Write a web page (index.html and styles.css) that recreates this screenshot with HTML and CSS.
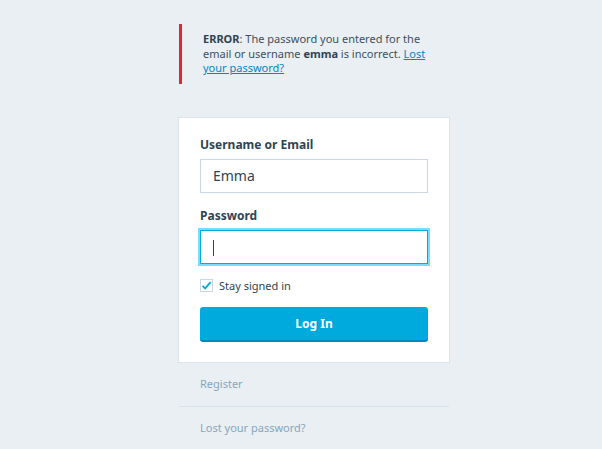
FILE: index.html
```html
<!DOCTYPE html>
<html>
<head>
<meta charset="utf-8">
<link rel="stylesheet" href="styles.css">
</head>
<body>
<div class="wrap">
  <div class="notice">
    <p><strong>ERROR</strong>: The password you entered for the email or username <strong>emma</strong> is incorrect. <a href="#">Lost your password?</a></p>
  </div>
  <form class="card">
    <label class="label">Username or Email</label>
    <div class="input">Emma</div>
    <label class="label pw">Password</label>
    <div class="input focus"><span class="caret"></span></div>
    <div class="remember">
      <span class="box"><svg width="11" height="11" viewBox="0 0 11 11"><path d="M1.5 5.8 L4.2 8.4 L9.6 2.2" fill="none" stroke="#00aadc" stroke-width="1.8"/></svg></span>
      <span>Stay signed in</span>
    </div>
    <div class="btn">Log In</div>
  </form>
  <div class="links">
    <a class="lnk" href="#">Register</a>
    <a class="lnk" href="#">Lost your password?</a>
  </div>
</div>
</body>
</html>
```
FILE: styles.css
```css
html, body { margin: 0; padding: 0; }
body {
  background: #e9eff3;
  font-family: "Noto Sans", "Open Sans", sans-serif;
  color: #2e4453;
  height: 449px;
  overflow: hidden;
}
.wrap {
  width: 270px;
  margin-left: 179px;
  padding-top: 24px;
}
.notice {
  border-left: 3px solid #e0282e;
  padding: 8px 18px 8px 21px;
  font-size: 11px;
  line-height: 14.5px;
  color: #3d4f5d;
}
.notice p { margin: 0; }
.notice strong { color: #2e4453; }
.notice a { color: #0087be; }
.card {
  margin-top: 34px;
  background: #fff;
  box-shadow: 0 0 0 1px #dbe4ea;
  padding: 19px 21px 20px 21px;
  display: flex;
  flex-direction: column;
}
.label {
  font-weight: bold;
  font-size: 12px;
  line-height: 16px;
  margin-bottom: 6px;
}
.label.pw { margin-top: 15px; }
.input {
  height: 32px;
  border: 1px solid #c8d7e1;
  padding: 0 12px;
  font-size: 14px;
  line-height: 32px;
  color: #2e4453;
}
.input.focus {
  border-color: #00aadc;
  box-shadow: 0 0 0 2px #78dcfa;
}
.caret {
  display: inline-block;
  width: 1px;
  height: 16px;
  background: #2e4453;
  vertical-align: middle;
}
.remember {
  display: flex;
  align-items: center;
  gap: 6px;
  margin-top: 15px;
  font-size: 11px;
  line-height: 14px;
}
.box {
  width: 11px;
  height: 11px;
  border: 1px solid #c8d7e1;
  display: flex;
  align-items: center;
  justify-content: center;
}
.btn {
  margin-top: 14px;
  height: 33px;
  background: #00aadc;
  border-bottom: 2px solid #0087be;
  border-radius: 3px;
  color: #fff;
  font-weight: bold;
  font-size: 12px;
  line-height: 33px;
  text-align: center;
}
.links {
  display: flex;
  flex-direction: column;
}
.lnk {
  color: #87a6bc;
  text-decoration: none;
  font-size: 11px;
  line-height: 14px;
  padding: 15px 21px 15px 21px;
}
.lnk + .lnk { border-top: 1px solid #d8e2e9; padding-top: 14px; }
```
